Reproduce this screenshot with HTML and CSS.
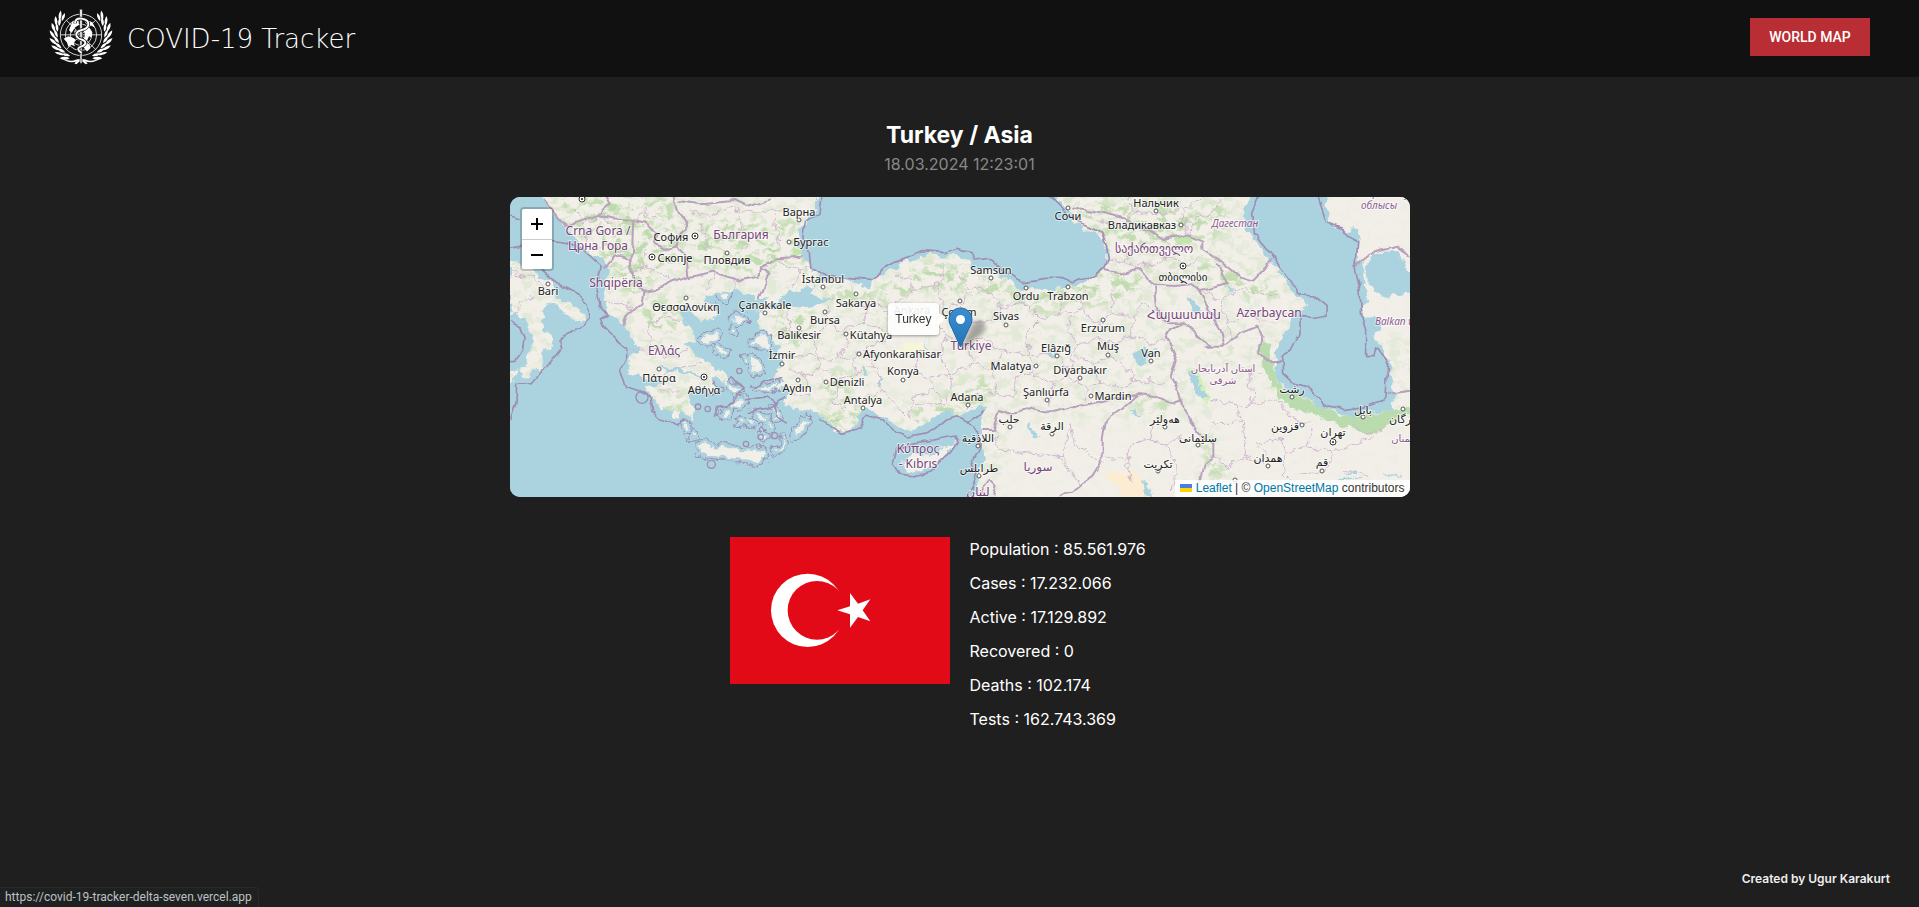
FILE: index.html
```html
<!DOCTYPE html>
<html lang="en">
<head>
<meta charset="utf-8">
<meta name="viewport" content="width=device-width, initial-scale=1">
<title>COVID-19 Tracker</title>
<link rel="stylesheet" href="styles.css">
</head>
<body>
<header class="topbar">
  <a class="brand" href="#home">
    <svg class="brand-logo" viewBox="56 24 192 170" aria-hidden="true">
      <defs>
        <g id="leaf-pair" fill="#fff">
          <path d="M82 112Q70 105 72 88Q84 96 82 112Z"/>
          <path d="M75 115Q59 108 58 90Q73 98 75 115Z"/>
        </g>
        <g id="branch">
          <use href="#leaf-pair" transform="rotate(42 152 104)"/>
          <use href="#leaf-pair" transform="rotate(28 152 104)"/>
          <use href="#leaf-pair" transform="rotate(14 152 104)"/>
          <use href="#leaf-pair"/>
          <use href="#leaf-pair" transform="rotate(-14 152 104)"/>
          <use href="#leaf-pair" transform="rotate(-28 152 104)"/>
          <use href="#leaf-pair" transform="rotate(-42 152 104)"/>
          <use href="#leaf-pair" transform="rotate(-56 152 104)"/>
          <path d="M92 172Q118 188 138 178Q158 172 172 190L166 192Q154 178 140 184Q112 192 92 172Z" fill="#fff"/>
        </g>
      </defs>
      <use href="#branch"/>
      <use href="#branch" transform="translate(304 0) scale(-1 1)"/>
      <g fill="none" stroke="#fff" stroke-width="2.4">
        <circle cx="152" cy="104" r="62"/><circle cx="152" cy="104" r="47"/>
        <circle cx="152" cy="104" r="32"/><circle cx="152" cy="104" r="17"/>
        <path d="M90 104H214M108 60L196 148M196 60L108 148"/>
      </g>
      <g fill="#fff">
        <path d="M100 116L114 108L126 112L136 118L130 128L134 138L122 134L114 140L110 126Z"/>
        <path d="M158 86L174 80L186 96L184 112L176 108L170 122L160 118L164 104Z"/>
        <path d="M164 128L178 132L180 144L170 154L160 142Z"/>
        <path d="M126 64L144 58L146 74L134 82L124 98L116 90Z"/>
        <path d="M160 56L186 66L194 82L182 76L168 72Z"/>
        <path d="M132 92L146 88L144 104L134 106Z"/>
      </g>
      <path d="M148 27H156L155 190H149Z" fill="#fff" stroke="#111" stroke-width="2"/>
      <path d="M134 70Q134 54 152 55Q176 58 174 74Q172 86 152 90Q136 94 138 106Q142 116 154 118Q168 122 164 132Q160 138 150 140Q140 144 146 152L154 158" fill="none" stroke="#111" stroke-width="10"/>
      <path d="M134 70Q134 54 152 55Q176 58 174 74Q172 86 152 90Q136 94 138 106Q142 116 154 118Q168 122 164 132Q160 138 150 140Q140 144 146 152L154 158" fill="none" stroke="#fff" stroke-width="6"/>
    </svg>
    <span class="brand-name">COVID-19 Tracker</span>
  </a>
  <a class="map-link" href="#world-map">WORLD MAP</a>
</header>

<main class="country">
  <h1 class="country-title">Turkey / Asia</h1>
  <p class="country-date">18.03.2024 12:23:01</p>

  <section class="map" aria-label="Map of Turkey">
    <svg class="map-layer" viewBox="30 21 2700 900" preserveAspectRatio="xMidYMid slice" aria-hidden="true">
      <defs>
        <filter id="rough" filterUnits="userSpaceOnUse" x="0" y="0" width="2760" height="950">
          <feTurbulence type="fractalNoise" baseFrequency="0.035" numOctaves="3" seed="4"/>
          <feDisplacementMap in="SourceGraphic" scale="34" xChannelSelector="R" yChannelSelector="G"/>
        </filter>
        <filter id="rough-soft" filterUnits="userSpaceOnUse" x="0" y="0" width="2760" height="950">
          <feTurbulence type="fractalNoise" baseFrequency="0.02" numOctaves="2" seed="8"/>
          <feDisplacementMap in="SourceGraphic" scale="24" xChannelSelector="R" yChannelSelector="G"/>
        </filter>
        <filter id="forest" filterUnits="userSpaceOnUse" x="0" y="0" width="2760" height="950" color-interpolation-filters="sRGB">
          <feTurbulence type="fractalNoise" baseFrequency="0.03 0.045" numOctaves="5" seed="11"/>
          <feColorMatrix values="0 0 0 0 0.75  0 0 0 0 0.86  0 0 0 0 0.68  5 0 0 0 -2.3"/>
        </filter>
        <filter id="blur" x="-30%" y="-30%" width="160%" height="160%"><feGaussianBlur stdDeviation="16"/></filter>
        <path id="land" d="M30 210L60 212L100 245L145 280L175 325L210 340L240 365L257 380L247 400L225 385L190 370L175 345L150 337L128 350L122 380L130 415L160 440L162 475L135 480L125 500L120 530L90 560L65 563L62 545L78 515L75 495L95 480L95 440L75 385L45 375L30 378Z
          M20 548L57 535L40 570L20 590Z
          M110 10L150 60L185 95L210 130L250 170L300 205L330 235L318 270L312 310L320 350L345 385L370 405L385 440L425 472L400 500L385 520L390 545L430 560L500 575L440 590L450 610L470 640L480 665L500 645L515 665L530 690L540 655L560 670L580 692L578 655L565 625L570 595L600 595L640 615L652 600L630 570L650 560L690 590L668 550L640 525L610 505L580 490L565 470L550 455L590 455L580 430L550 400L540 370L558 345L575 360L580 385L600 392L640 385L655 365L630 340L615 325L650 310L700 300L740 310L775 325L805 322L770 365L800 350L845 325L865 305L900 295L935 290L960 262L930 225L905 200L910 180L895 165L900 120L920 90L945 60L945 10Z
          M935 295L970 270L1000 262L1060 278L1110 290L1130 265L1180 235L1230 210L1280 195L1330 200L1380 195L1400 210L1430 240L1480 245L1520 270L1570 300L1600 290L1640 300L1700 290L1760 275L1800 250L1825 220L1825 180L1800 140L1740 105L1700 60L1680 40L1660 10L2760 0L2760 950L1425 950L1435 860L1455 800L1440 760L1450 720L1435 690L1460 655L1450 645L1420 660L1380 682L1350 660L1310 675L1270 705L1215 725L1180 700L1150 680L1120 660L1090 660L1070 680L1060 710L1020 730L985 700L960 670L920 665L880 655L860 640L850 615L875 600L830 592L855 575L800 560L830 545L845 520L825 500L840 475L820 455L815 430L790 420L775 400L775 370L800 355L860 345L900 350L950 345L1000 325L960 320L925 312Z"/>
        <path id="islands" d="M595 765L615 760L640 775L700 775L740 785L790 780L795 800L770 820L730 805L680 805L620 795L600 790ZM755 455L780 435L805 440L800 470L775 470ZM698 380L725 375L735 390L715 402L698 396ZM660 312L685 312L680 330L665 330ZM640 430L655 425L640 455L610 460L605 450ZM760 505L775 510L780 540L765 548L755 540ZM885 725L900 700L920 690L918 705L905 725L888 740ZM850 740L855 755L845 780L825 785L845 765ZM650 470L680 485L672 495L650 480ZM735 505L745 510L738 518ZM700 415L705 425L698 432ZM765 595L800 590L830 578L835 588L800 602ZM640 590L655 600L640 605ZM690 580L720 600L710 610L690 595ZM715 630L735 632L730 650L700 650ZM675 660L690 665L685 680L665 675ZM770 675L800 680L795 690L775 686ZM740 690L760 700L750 708ZM800 700L815 710L808 715ZM550 700L565 705L560 720ZM575 730L585 740L578 745ZM790 725L800 740L790 748ZM720 690L730 700L718 702ZM820 650L835 680L825 690Z"/>
        <path id="cyprus" d="M1210 812L1240 792L1290 797L1330 775L1378 752L1330 800L1310 825L1270 840L1240 850L1215 838Z"/>
        <clipPath id="land-clip"><use href="#land"/></clipPath>
        <mask id="forest-mask" maskUnits="userSpaceOnUse" x="0" y="0" width="2760" height="950">
          <rect width="2760" height="950" fill="#484848"/>
          <g filter="url(#blur)" fill="#fff">
            <path d="M150 20H520L540 180L400 330L300 200ZM560 90L880 90L900 200L760 250L580 220ZM850 170L920 190L960 265L900 230ZM1000 280L1120 300L1300 210L1500 260L1560 330L1300 300L1120 340L980 330ZM430 330L560 340L480 460L420 420ZM460 600L560 620L540 680L480 650ZM950 660L1080 640L1060 730L1000 730ZM1200 680L1450 560L1500 600L1300 720ZM1680 30L2200 50L2150 150L1900 180L1780 110ZM1820 250L1980 240L1900 330L1600 370L1500 310ZM1950 200L2150 220L2350 300L2300 340L2100 260ZM2100 480L2200 440L2190 480ZM1880 620L2040 630L2010 660L1900 650ZM2100 700L2180 850L2120 860ZM800 350L960 370L940 460L850 470ZM960 540L1060 560L1040 640L970 620Z"/>
          </g>
          <g filter="url(#blur)" fill="#101010"><path d="M1180 420L1340 480L1290 640L1150 600ZM1540 700H2090V940H1500ZM2200 620H2600V940H2200ZM2130 540L2290 560L2280 800H2150ZM2450 0H2760V440H2600ZM2600 700H2760V940H2500Z"/></g>
        </mask>
      </defs>

      <rect width="2760" height="950" fill="#aad3df"/>

      <g filter="url(#rough)">
        <use href="#islands" fill="#a08db4" stroke="#a08db4" stroke-width="24" stroke-linejoin="round"/>
        <use href="#islands" fill="#aad3df" stroke="#aad3df" stroke-width="18" stroke-linejoin="round"/>
        <use href="#land" fill="#f2efe9"/>
        <use href="#islands" fill="#f2efe9"/>
        <use href="#cyprus" fill="#f2efe9"/>
        <g clip-path="url(#land-clip)">
          <g mask="url(#forest-mask)"><rect width="2760" height="950" filter="url(#forest)"/></g>
          <path d="M2300 450L2325 550L2345 595L2420 625L2520 678L2600 670L2700 660L2730 650V670L2660 700L2640 735L2580 725L2480 690L2400 660L2350 640L2310 570L2270 470Z" fill="#b9dbad"/>
          <path d="M2015 140L2070 135L2080 160L2030 165ZM880 175L920 190L925 205L870 190Z" fill="#c2e5a9"/>
          <path d="M2070 540L2090 540L2120 610L2125 640L2100 625Z" fill="#d5efb8"/>
          <path d="M1800 855L1900 845L1925 870L1960 921H1870L1850 880Z" fill="#fbecd2"/>
          <path d="M1190 470L1260 455L1280 480L1200 500Z" fill="#f5f6d6"/>
        </g>
        <g fill="#aad3df">
          <path d="M2252 10L2230 60L2235 110L2265 150L2300 200L2340 240L2360 285L2385 320L2425 345L2400 360L2380 370L2370 400L2355 430L2335 450L2325 550L2345 590L2370 610L2420 620L2460 650L2520 670L2560 680L2600 665L2682 662L2680 600L2670 540L2660 500L2620 435L2645 410L2640 385L2592 382L2602 320L2590 260L2580 220L2570 190L2582 150L2570 115L2530 125L2485 90L2475 10Z"/>
          <path d="M2600 215L2630 192L2690 190L2740 260V312L2680 310L2650 325L2615 290L2590 240Z"/>
          <path d="M2060 325L2075 325L2105 350L2110 370L2080 365ZM2070 550L2085 550L2095 580L2115 610L2108 630L2085 610Z"/>
          <path d="M1885 500L1910 480L1935 475L1955 490L1940 510L1920 525L1900 510ZM1940 475L1970 475V480ZM1590 700L1600 730L1625 745L1600 745L1585 715ZM1925 870L1940 880L1960 920H1940ZM1095 530L1105 545L1100 560L1092 545ZM1132 560L1150 575L1142 590ZM1270 450L1285 480L1275 470ZM1890 660L1925 675H1900ZM2540 850H2570V855H2530ZM2650 853H2700V857H2655ZM2510 863H2580V868H2515Z"/>
          <path d="M1150 362L1175 366L1160 370ZM1320 345L1345 350L1330 355ZM2170 290L2210 305L2195 308ZM1640 480L1680 500L1650 495ZM480 530L520 535L580 545L600 560L560 552L500 545Z"/>
        </g>
      </g>

      <g class="map-admin" filter="url(#rough)">
        <path d="M30 250L60 260L90 255L140 290M60 340L80 320L110 330M40 380L60 350M220 60L250 100L300 80L340 100M250 100L260 160M400 90L430 60L470 90M400 240L430 230L490 250L520 275M430 230L440 180M310 330L400 350M440 400L500 380L540 390M440 400L450 470L500 500L570 480M380 480L440 480M470 560L520 540L610 520M480 600L540 600M560 60L620 80L680 50L760 70L860 60M600 100L620 180M720 70L740 180M820 70L840 180M640 245L620 300M700 260L700 300"/>
        <path d="M840 220L900 240L880 290M900 240L930 230M860 360L880 420L830 430M880 420L940 440L990 400L980 350M940 440L950 500L860 500M950 500L1010 510L1040 470L1030 420L990 400M1030 420L1090 400L1110 350L1060 330M1090 400L1150 420L1200 400L1190 340L1110 350M1190 340L1240 300L1220 260L1180 260M1240 300L1310 290L1330 220M1310 290L1330 360L1300 400L1250 410L1200 400M1330 360L1390 340L1400 290L1380 250M1400 290L1460 300L1480 260M1460 300L1500 350L1480 390L1400 400L1390 340M1500 350L1570 340L1560 300M1570 340L1620 390L1680 370L1690 310M1680 370L1740 360L1760 300M1740 360L1800 400L1840 370L1830 290"/>
        <path d="M870 540L920 560L960 530L950 500M920 560L930 620L870 600M960 530L1010 570L1070 550L1060 500L1010 510M1010 570L1000 640L1040 660M1070 550L1120 520L1100 470L1060 500M1120 520L1150 600L1200 660L1230 690M1150 600L1100 620L1060 660M1100 470L1160 450L1200 400M1230 690L1240 620L1300 600L1330 640L1250 650M1330 640L1360 590L1350 550L1290 560L1300 600M1290 560L1240 540L1260 480L1320 500L1350 550M1320 500L1340 440L1300 400M1340 440L1400 460L1420 520L1380 540L1350 550M1420 520L1480 540L1500 480L1450 440L1400 460M1480 540L1490 600L1420 620L1400 660M1490 600L1540 620L1550 560L1600 550L1590 500L1500 480M1590 500L1580 430L1620 390M1600 550L1660 580L1700 560L1690 510L1640 490L1590 500M1660 580L1650 650M1700 560L1760 590L1750 640M1700 560L1720 500L1780 520L1830 500L1800 450L1740 460L1720 500M1740 460L1700 420L1720 380M1780 520L1800 580L1760 590M1800 580L1860 590L1900 570L1880 530L1830 500M1900 570L1990 580M1840 370L1900 380L1930 340L1970 360M1900 380L1890 440L1850 460L1800 450M1890 440L1950 460L1990 450"/>
        <path d="M1780 90L1860 110L1900 60L1880 21M1900 60L1990 70L2050 50L2060 140M2050 50L2100 30M2150 60L2160 21M2060 140L2080 90L2150 60M1810 210L1870 220L1900 170M1870 220L1960 230L2000 200L2060 230L2110 200M2080 290L2160 330L2230 300L2330 320M2160 330L2180 400L2240 370L2300 400M2180 400L2200 440"/>
        <path d="M2120 620L2210 650L2260 640L2330 630L2380 690L2430 700M2210 650L2230 700L2140 700M2260 640L2250 540L2290 560M2230 700L2240 800L2180 830L2130 790M2240 800L2300 820L2270 760L2340 740L2360 780L2420 770L2440 710M2360 780L2350 850L2400 900M2420 770L2500 790L2540 770L2620 740M2500 790L2480 840L2400 850M1810 800L1880 810L1900 760L1950 750L1960 700M1880 810L1890 870M1950 750L2000 760L2040 740M2000 760L2030 830L2020 900M1710 700L1720 760L1800 820M1670 790L1740 880M1500 780L1600 790L1690 800L1740 880M1690 800L1710 700M1500 780L1480 720M2550 700L2600 730L2650 720M2530 840L2610 860"/>
      </g>

      <g class="map-border" filter="url(#rough-soft)">
        <path d="M130 30L180 90L210 110L230 95L290 75L325 45L310 10M520 10L530 60L562 100L535 140L530 170L560 200L565 262M430 305L470 300L520 275L565 262L640 245L720 270L775 260L780 230L830 205L905 200M780 230L808 250L790 300L778 325M535 30L600 40L700 30L740 48L810 25M370 410L385 375L425 340L430 305L400 270L395 210L340 195L310 230M400 90L440 100L470 130L460 160L500 180L530 170M400 90L395 210M290 75L340 85L400 90"/>
        <path d="M1430 921L1470 870L1490 890L1480 921M1450 720L1480 720L1500 660L1540 672L1600 655L1660 668L1750 645L1820 630L1910 615L1960 620L2020 640L2050 630M2000 440L2030 510L2015 560L2040 610L2050 650L2070 690L2100 730L2140 760L2140 800L2110 820L2100 880M1910 615L1860 660L1815 690L1805 750L1805 820L1780 860L1680 921"/>
        <path d="M1720 55L1800 70L1880 90L1960 130L1990 150L2060 135L2110 155L2110 180L2160 210L2220 260L2260 272L2290 240L2320 205M1815 240L1860 250L1910 240L1960 280L2020 285L2070 280L2100 300L2180 280L2170 240L2145 215M1965 285L1970 350L2005 400L2050 400L2090 440L2140 470M2090 290L2120 340L2130 370L2160 420L2170 470M2000 440L2010 420L2050 400M2120 470L2170 470L2220 430L2270 410L2290 440L2280 490L2310 515L2345 518M2565 230L2620 185L2690 167L2730 195M2660 615L2730 605"/>
      </g>

      <g class="map-sea-border" filter="url(#rough-soft)">
        <path d="M30 80L60 90M30 175L90 160L150 150L210 160L250 180L300 225L290 290L300 350L322 375L298 390L310 410L350 450L380 475L380 510L362 545L380 590L410 600L450 620L455 660L480 685L510 695L535 712L550 685M120 235L150 260L190 290L235 315L265 345L270 385L255 410L220 425L180 447L185 475L140 530L100 578L50 580L48 640L30 690M30 395L60 410L72 440L68 480L45 515L30 515"/>
        <path d="M967 10L960 70L920 95L912 140L925 190L930 230L980 255L1040 262L1110 268L1170 225L1210 205L1265 182L1330 188L1370 175L1410 185L1420 210L1470 205L1520 250L1570 275L1630 265L1680 265L1720 278L1780 255L1815 235L1825 210L1820 170L1805 130L1770 110L1720 90L1680 50L1640 10"/>
        <path d="M960 690L990 710L1020 730L1080 715L1098 675L1150 690L1180 720L1230 740L1290 730L1340 690L1370 680L1400 695L1440 730L1440 770L1420 810L1430 850L1420 880L1400 921M1180 820L1190 780L1230 760L1300 750L1360 738L1372 755L1340 800L1300 840L1250 855L1200 850ZM1400 700L1450 660"/>
        <path d="M2275 21L2255 70L2260 130L2320 205L2365 260L2395 310L2440 315L2482 350L2480 375L2440 382L2400 380L2400 430L2375 480L2345 500L2348 550L2380 580L2420 590L2470 640L2530 662L2580 655L2655 630L2660 510L2630 470L2625 500L2600 500L2600 430L2585 380L2580 300L2565 230L2570 160L2520 110L2480 95L2455 21M2345 518H2325"/>
        <path d="M690 560L730 600L700 640L650 650L640 680M740 630L800 620L830 640L800 655L740 665M850 560L790 575L760 595M860 700L830 680L820 640L850 620"/>
      </g>
      <g fill="none" stroke="#a08db4" stroke-width="4"><circle cx="426" cy="622" r="18"/><circle cx="634" cy="823" r="12"/><circle cx="718" cy="543" r="8"/><circle cx="738" cy="762" r="8"/><circle cx="824" cy="737" r="9"/><circle cx="594" cy="650" r="8"/><circle cx="623" cy="657" r="8"/><circle cx="782" cy="741" r="8"/></g>
    </svg>

    <svg class="map-layer map-labels" viewBox="0 0 900 300" preserveAspectRatio="xMidYMid slice">
      <g class="town">
        <circle cx="289" cy="23" r="2"/><circle cx="217" cy="56" r="2"/><circle cx="38" cy="87" r="2"/><circle cx="176" cy="101" r="2"/><circle cx="255" cy="116" r="2"/><circle cx="149" cy="172" r="2"/><circle cx="279" cy="45" r="2"/><circle cx="313" cy="90" r="2"/><circle cx="346" cy="97" r="2"/><circle cx="315" cy="115" r="2"/><circle cx="289" cy="131" r="2"/><circle cx="336" cy="137" r="2"/><circle cx="272" cy="167" r="2"/><circle cx="349" cy="157" r="2"/><circle cx="393" cy="183" r="2"/><circle cx="288" cy="183" r="2"/><circle cx="316" cy="185" r="2"/><circle cx="353" cy="211" r="2"/><circle cx="450" cy="104" r="2"/><circle cx="481" cy="81" r="2"/><circle cx="516" cy="91" r="2"/><circle cx="558" cy="90" r="2"/><circle cx="496" cy="128" r="2"/><circle cx="547" cy="159" r="2"/><circle cx="526" cy="169" r="2"/><circle cx="570" cy="181" r="2"/><circle cx="537" cy="203" r="2"/><circle cx="458" cy="208" r="2"/><circle cx="500" cy="230" r="2"/><circle cx="542" cy="237" r="2"/><circle cx="468" cy="249" r="2"/><circle cx="469" cy="279" r="2"/><circle cx="558" cy="11" r="2"/><circle cx="646" cy="14" r="2"/><circle cx="671" cy="28" r="2"/><circle cx="593" cy="123" r="2"/><circle cx="598" cy="158" r="2"/><circle cx="641" cy="164" r="2"/><circle cx="581" cy="199" r="2"/><circle cx="655" cy="230" r="2"/><circle cx="688" cy="248" r="2"/><circle cx="648" cy="274" r="2"/><circle cx="782" cy="200" r="2"/><circle cx="853" cy="220" r="2"/><circle cx="893" cy="212" r="2"/><circle cx="792" cy="228" r="2"/><circle cx="758" cy="269" r="2"/><circle cx="812" cy="274" r="2"/><circle cx="725" cy="283" r="2"/>
      </g>
      <g class="capital">
        <circle cx="72" cy="2" r="3"/><circle cx="185" cy="39" r="3"/><circle cx="142" cy="60" r="3"/><circle cx="194" cy="180" r="3"/><circle cx="673" cy="69" r="3"/><circle cx="823" cy="245" r="3"/>
      </g>
      <g class="capital-dot">
        <circle cx="72" cy="2" r="1"/><circle cx="185" cy="39" r="1"/><circle cx="142" cy="60" r="1"/><circle cx="194" cy="180" r="1"/><circle cx="673" cy="69" r="1"/><circle cx="823" cy="245" r="1"/>
      </g>
      <g class="city-name">
        <text x="289" y="19">Варна</text><text x="161" y="44">София</text><text x="165" y="65">Скопје</text><text x="217" y="67">Пловдив</text><text x="38" y="98">Bari</text><text x="176" y="114">Θεσσαλονίκη</text><text x="255" y="112">Çanakkale</text><text x="149" y="185">Πάτρα</text><text x="194" y="197">Αθήνα</text><text x="301" y="49">Бургас</text><text x="313" y="86">İstanbul</text><text x="346" y="110">Sakarya</text><text x="315" y="127">Bursa</text><text x="289" y="142">Balıkesir</text><text x="361" y="142">Kütahya</text><text x="272" y="162">İzmir</text><text x="392" y="161">Afyonkarahisar</text><text x="393" y="178">Konya</text><text x="287" y="195">Aydın</text><text x="337" y="189">Denizli</text><text x="353" y="207">Antalya</text><text x="402" y="117">Ankara</text><text x="449" y="119">Çorum</text><text x="481" y="77">Samsun</text><text x="516" y="103">Ordu</text><text x="558" y="103">Trabzon</text><text x="496" y="123">Sivas</text><text x="546" y="155">Elâzığ</text><text x="501" y="173">Malatya</text><text x="570" y="177">Diyarbakır</text><text x="536" y="199">Şanlıurfa</text><text x="457" y="204">Adana</text><text x="499" y="226">حلب</text><text x="542" y="233">الرقة</text><text x="468" y="245">اللاذقية</text><text x="469" y="275">طرابلس</text><text x="558" y="23">Сочи</text><text x="646" y="10">Нальчик</text><text x="632" y="32">Владикавказ</text><text x="673" y="84">თბილისი</text><text x="593" y="135">Erzurum</text><text x="598" y="153">Muş</text><text x="641" y="160">Van</text><text x="603" y="203">Mardin</text><text x="655" y="226">هەولێر</text><text x="688" y="245">سلێمانی</text><text x="648" y="271">تكريت</text><text x="782" y="196">رشت</text><text x="853" y="217">بابل</text><text x="893" y="226">گرگان</text><text x="775" y="233">قزوین</text><text x="823" y="239">تهران</text><text x="758" y="265">همدان</text><text x="812" y="269">قم</text>
      </g>
      <g class="country-name">
        <text x="88" y="38">Crna Gora /</text><text x="88" y="53">Црна Гора</text><text x="106" y="90">Shqipëria</text><text x="231" y="42">България</text><text x="154" y="158">Ελλάς</text><text x="461" y="153">Türkiye</text><text x="528" y="274">سوريا</text><text x="468" y="299">لبنان</text><text x="408" y="256">Κύπρος</text><text x="408" y="271">- Kıbrıs</text><text x="644" y="56">საქართველო</text><text x="674" y="122">Հայաստան</text><text x="759" y="120">Azərbaycan</text>
      </g>
      <g class="region-name">
        <text class="slanted" x="725" y="30">Дагестан</text><text class="slanted" x="869" y="12">облысы</text><text class="slanted" x="872" y="0">Маңғыстау</text><text class="slanted" x="901" y="128">Balkan welaýaty</text><text x="713" y="175">استان آذربایجان</text><text x="713" y="187">شرقی</text><text x="895" y="245">سمنان</text>
      </g>
    </svg>

    <svg class="map-pin" viewBox="0 0 54 44" aria-hidden="true">
      <defs>
        <linearGradient id="pin-fill" x2="0" y2="1"><stop stop-color="#3a8fd0"/><stop offset="1" stop-color="#2474b5"/></linearGradient>
        <filter id="pin-blur"><feGaussianBlur stdDeviation="2"/></filter>
      </defs>
      <path d="M13 41L24 17Q32 10 37 17Q39 25 29 31Z" fill="#000" opacity=".3" filter="url(#pin-blur)"/>
      <path d="M12.500 1C6 1 1 6 1 12.500C1 16 2.500 18.500 4 21.500L12.500 40L21 21.500C22.500 18.500 24 16 24 12.500C24 6 19 1 12.500 1Z" fill="url(#pin-fill)" stroke="#2268a5"/>
      <circle cx="12.500" cy="12.500" r="4.500" fill="#fff"/>
    </svg>
    <div class="map-tooltip">Turkey</div>

    <div class="map-zoom">
      <button class="zoom-button" type="button" aria-label="Zoom in"><svg class="zoom-sign" viewBox="0 0 12 12" aria-hidden="true"><path d="M0 6H12M6 0V12"/></svg></button>
      <button class="zoom-button" type="button" aria-label="Zoom out"><svg class="zoom-sign" viewBox="0 0 12 12" aria-hidden="true"><path d="M0 6H12"/></svg></button>
    </div>

    <div class="map-credit">
      <svg class="credit-flag" viewBox="0 0 12 8" aria-hidden="true"><path d="M0 0H12V4H0Z" fill="#4c7be1"/><path d="M0 4H12V8H0Z" fill="#ffd500"/></svg>
      <a href="#leaflet">Leaflet</a> | © <a href="#osm">OpenStreetMap</a> contributors
    </div>
  </section>

  <section class="details">
    <svg class="flag" viewBox="0 0 660 441" role="img" aria-label="Flag of Turkey">
      <rect width="660" height="441" fill="#e30a17"/>
      <circle cx="233" cy="220" r="110" fill="#fff"/>
      <circle cx="261" cy="220" r="88" fill="#e30a17"/>
      <path d="M322 220L360 208V168L384 200L421 187L398 220L421 253L384 240L360 272V232Z" fill="#fff"/>
    </svg>
    <ul class="stats">
      <li>Population : 85.561.976</li>
      <li>Cases : 17.232.066</li>
      <li>Active : 17.129.892</li>
      <li>Recovered : 0</li>
      <li>Deaths : 102.174</li>
      <li>Tests : 162.743.369</li>
    </ul>
  </section>
</main>

<footer class="credits">Created by Ugur Karakurt</footer>
<div class="status">https://covid-19-tracker-delta-seven.vercel.app</div>
</body>
</html>
```
FILE: styles.css
```css
* { box-sizing: border-box; }

body {
  margin: 0;
  min-height: 100vh;
  display: flex;
  flex-direction: column;
  background: #1f1f1f;
  color: #fff;
  font: 16px/24px Inter, sans-serif;
}

.topbar {
  display: flex;
  align-items: center;
  justify-content: space-between;
  height: 77px;
  padding: 0 49px;
  background: #111;
}

.brand {
  display: flex;
  align-items: center;
  gap: 14px;
  color: #fff;
  text-decoration: none;
}

.brand-logo { width: 64px; height: 57px; margin-bottom: 4px; }

.brand-name { font: 200 26px/32px "DejaVu Sans", sans-serif; }

.map-link {
  width: 120px;
  margin-bottom: 3px;
  background: #b82e34;
  color: #fff;
  font: 500 14px/38px Roboto, sans-serif;
  text-align: center;
  text-decoration: none;
}

.country {
  display: flex;
  flex: 1;
  flex-direction: column;
  align-items: center;
  padding-top: 42px;
}

.country-title { margin: 0; font-size: 23px; line-height: 32px; }

.country-date { margin: 0 0 19px; color: #888; font-size: 16px; line-height: 27px; }

.map {
  position: relative;
  width: 100%;
  max-width: 900px;
  height: 300px;
  overflow: hidden;
  border-radius: 10px;
  background: #aad3df;
}

.map-layer { position: absolute; inset: 0; width: 100%; height: 100%; }

.map-admin { fill: none; stroke: #cfb8cf; stroke-width: 3; }
.map-border { fill: none; stroke: #b8a1bd; stroke-width: 6; stroke-linejoin: round; }
.map-sea-border { fill: none; stroke: #9f8db3; stroke-width: 5; stroke-linejoin: round; }

.map-labels text {
  text-anchor: middle;
  paint-order: stroke;
  stroke: rgba(255, 255, 255, .6);
  stroke-width: 2px;
  stroke-linejoin: round;
}

.town { fill: #fff; stroke: #555; stroke-width: 1; }
.capital { fill: #fff; stroke: #333; stroke-width: 1; }
.capital-dot { fill: #222; }
.city-name { fill: #222; font: 11px "Noto Sans", "DejaVu Sans", sans-serif; }
.country-name { fill: #76457a; font: 12px "Noto Sans", "DejaVu Sans", sans-serif; }
.region-name { fill: #8d5a90; font: 10px "Noto Sans", "DejaVu Sans", sans-serif; }
.slanted { font-style: italic; }

.map-pin { position: absolute; left: calc(50% - 12px); top: 110px; width: 54px; height: 44px; }

.map-tooltip {
  position: absolute;
  top: 106px;
  right: calc(50% + 21px);
  padding: 7px;
  border-radius: 3px;
  background: #fff;
  box-shadow: 0 1px 3px rgba(0, 0, 0, .4);
  color: #222;
  font: 12px/18px "Liberation Sans", Arial, sans-serif;
  opacity: .9;
}

.map-tooltip::after {
  content: "";
  position: absolute;
  top: 10px;
  left: 100%;
  border: 6px solid transparent;
  border-left-color: #fff;
}

.map-zoom {
  position: absolute;
  top: 10px;
  left: 10px;
  border: 2px solid rgba(0, 0, 0, .2);
  border-radius: 4px;
  background-clip: padding-box;
}

.zoom-button {
  display: grid;
  place-items: center;
  width: 30px;
  height: 30px;
  padding: 0;
  border: 0;
  border-radius: 2px 2px 0 0;
  background: #fff;
}

.zoom-button + .zoom-button { border-top: 1px solid #ccc; border-radius: 0 0 2px 2px; }

.zoom-sign { width: 12px; height: 12px; fill: none; stroke: #000; stroke-width: 2; }

.map-credit {
  position: absolute;
  right: 0;
  bottom: 0;
  padding: 0 5px;
  background: rgba(255, 255, 255, .8);
  color: #333;
  font: 12px/17px "Liberation Sans", Arial, sans-serif;
}

.map-credit a { color: #0078a8; text-decoration: none; }

.credit-flag { width: 12px; height: 8px; }

.details {
  display: flex;
  align-items: flex-start;
  gap: 20px;
  margin-top: 40px;
}

.flag { display: block; width: 220px; }

.stats { width: 220px; margin: 0; padding: 0; list-style: none; }

.stats li { margin-bottom: 10px; line-height: 24px; }

.credits {
  padding: 0 29px 16px;
  color: #eee;
  font-size: 12px;
  font-weight: 600;
  text-align: right;
}

.status {
  position: fixed;
  left: 0;
  bottom: 0;
  padding: 0 6px 0 5px;
  border-top: 1px solid #292929;
  border-right: 1px solid #292929;
  border-top-right-radius: 3px;
  background: #1f2020;
  color: #bdc1c6;
  font: 12px/19px Roboto, sans-serif;
}
```
